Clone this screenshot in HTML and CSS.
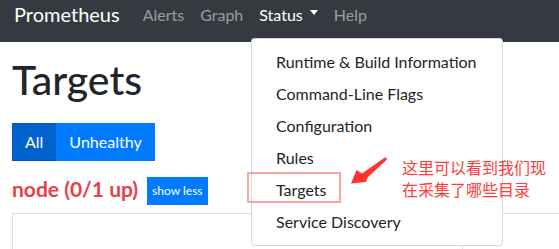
FILE: index.html
```html
<!DOCTYPE html>
<html lang="zh">
<head>
<meta charset="utf-8">
<title>Prometheus Time Series Collection and Processing Server</title>
<link rel="stylesheet" href="styles.css">
</head>
<body>
<nav class="navbar">
  <a class="brand">Prometheus</a>
  <a class="nav-link">Alerts</a>
  <a class="nav-link">Graph</a>
  <a class="nav-link active">Status<span class="caret"></span></a>
  <a class="nav-link">Help</a>
</nav>

<div class="dropdown-menu">
  <a class="dropdown-item">Runtime &amp; Build Information</a>
  <a class="dropdown-item">Command-Line Flags</a>
  <a class="dropdown-item">Configuration</a>
  <a class="dropdown-item">Rules</a>
  <a class="dropdown-item">Targets</a>
  <a class="dropdown-item">Service Discovery</a>
</div>

<div class="annot-box"></div>
<svg class="annot-arrow" width="50" height="40" viewBox="345 150 50 40">
  <polygon points="351,183.5 356.5,170 362,173.5 385.5,157 387,159.5 367.5,177.5 366,182" fill="#ff3333"/>
</svg>
<div class="annot-text">这里可以看到我们现<br>在采集了哪些目录</div>

<main class="container">
  <h1 class="title">Targets</h1>
  <div class="btn-group">
    <button class="btn btn-active">All</button>
    <button class="btn">Unhealthy</button>
  </div>
  <div class="job-row">
    <span class="job-name">node (0/1 up)</span>
    <button class="btn btn-sm">show less</button>
  </div>
  <div class="card">
    <div class="table-row">
      <div class="cell cell-first">Endpoint</div>
      <div class="cell"></div>
    </div>
  </div>
</main>
</body>
</html>
```
FILE: styles.css
```css
html, body {
  margin: 0;
  padding: 0;
  overflow: hidden;
  background: #fff;
}
body {
  font-family: "Lato", "Noto Sans", sans-serif;
  color: #212529;
  width: 559px;
  height: 249px;
  position: relative;
}
a { text-decoration: none; }

.navbar {
  height: 42px;
  background: #343a40;
  display: flex;
  align-items: flex-start;
  padding: 0 0 0 14px;
  box-sizing: border-box;
}
.brand {
  color: #fff;
  font-size: 20px;
  line-height: 24px;
  margin-top: 2px;
  margin-right: 15px;
}
.nav-link {
  color: rgba(255,255,255,.5);
  font-size: 16px;
  line-height: 24px;
  margin-top: 3px;
  padding: 0 8px;
  display: flex;
  align-items: center;
}
.nav-link.active { color: #fff; }
.caret {
  display: inline-block;
  width: 0;
  height: 0;
  margin-left: 7px;
  margin-top: -5px;
  border-top: 5px solid #fff;
  border-left: 4px solid transparent;
  border-right: 4px solid transparent;
}

.dropdown-menu {
  position: absolute;
  left: 251px;
  top: 38px;
  width: 252px;
  box-sizing: border-box;
  padding: 7px 0;
  background: #fff;
  border: 1px solid rgba(0,0,0,.15);
  border-radius: 4px;
  z-index: 10;
}
.dropdown-item {
  display: block;
  padding: 4px 24px;
  font-size: 16px;
  line-height: 24px;
  color: #212529;
  white-space: nowrap;
}

.annot-box {
  position: absolute;
  left: 247px;
  top: 172px;
  width: 94px;
  height: 31px;
  box-sizing: border-box;
  border: 2px solid rgba(255, 90, 90, .55);
  z-index: 20;
}
.annot-arrow {
  position: absolute;
  left: 345px;
  top: 150px;
  z-index: 20;
}
.annot-text {
  position: absolute;
  left: 402px;
  top: 156px;
  font-family: "Noto Sans CJK SC", sans-serif;
  font-size: 16px;
  line-height: 22px;
  color: #ff3b3b;
  z-index: 20;
  white-space: nowrap;
}

.container {
  padding: 0 0 0 12px;
}
.title {
  font-size: 41px;
  font-weight: 500;
  line-height: 48px;
  margin: 14px 0 19px;
  color: #212529;
}
.btn-group {
  display: inline-flex;
  vertical-align: top;
}
.btn {
  font-family: "Lato", "Noto Sans", sans-serif;
  font-size: 16px;
  line-height: 24px;
  padding: 6px 12px;
  border: 1px solid #007bff;
  background: #007bff;
  color: #fff;
  margin: 0;
  border-radius: 0;
}
.btn-active {
  background: #0062cc;
  border-color: #005cbf;
}
.job-row {
  display: flex;
  align-items: center;
  margin-top: 16px;
  height: 28px;
}
.job-name {
  font-size: 21px;
  font-weight: 700;
  line-height: 28px;
  color: #e8404a;
  margin-right: 9px;
  margin-bottom: 4px;
}
.btn-sm {
  font-size: 12px;
  line-height: 18px;
  padding: 4px 4px;
}
.card {
  margin-top: 8px;
  border: 1px solid #dedede;
  border-right: none;
  border-bottom: none;
  height: 36px;
  padding: 24px 0 0 0;
  box-sizing: border-box;
  overflow: hidden;
}
.table-row {
  display: flex;
}
.cell {
  padding: 5px 0 0 28px;
  font-size: 16px;
  font-weight: 700;
  line-height: 24px;
  color: #212529;
}
.cell-first {
  width: 450px;
  box-sizing: border-box;
  border-right: 1px solid #dee2e6;
}
```
